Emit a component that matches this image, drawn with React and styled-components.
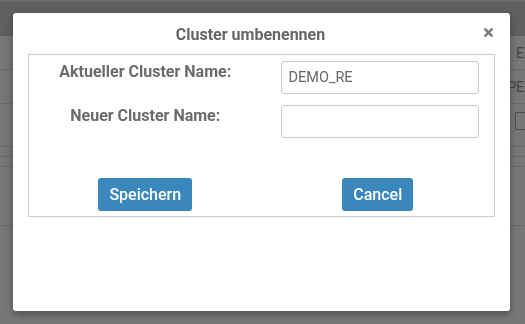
import React from 'react';
import styled, { createGlobalStyle } from 'styled-components';
import { FaTimes } from 'react-icons/fa';

const GlobalStyle = createGlobalStyle`
  html, body {
    margin: 0;
    padding: 0;
    width: 525px;
    height: 324px;
    overflow: hidden;
    font-family: Roboto, "Liberation Sans", Arial, sans-serif;
  }
`;

const Page = styled.div`
  width: 525px;
  height: 324px;
  background: #eeeeee;
`;

const NavBar = styled.div`
  height: 34px;
  border-top: 2px solid #d8d8d8;
  background: #c0c0c0;
  display: flex;
`;

const NavCell = styled.div`
  width: ${p => p.w}px;
  border-right: 1px solid #b4b4b4;
`;

const TableRow = styled.div`
  height: ${p => p.h}px;
  border-bottom: 1px solid #d6d6d6;
  display: flex;
  justify-content: flex-end;
  align-items: ${p => p.top ? 'flex-start' : 'center'};
  color: #888;
  font-size: 14px;
`;

const CellText = styled.span`
  padding-right: 1px;
`;

const TinyButton = styled.span`
  width: 9px;
  height: 16px;
  margin-top: 8px;
  border: 1px solid #999;
  border-right: none;
  border-radius: 2px 0 0 2px;
`;

const Backdrop = styled.div`
  position: fixed;
  inset: 0;
  background: rgba(0, 0, 0, 0.5);
`;

const Modal = styled.div`
  position: fixed;
  left: 13px;
  top: 13px;
  width: 497px;
  height: 298px;
  box-sizing: border-box;
  background: #fff;
  border-radius: 3px;
  box-shadow: 0 3px 9px rgba(0, 0, 0, 0.35);
  padding: 0 15px;
`;

const Header = styled.div`
  height: 41px;
  padding-right: 22px;
  display: flex;
  align-items: center;
  justify-content: center;
  position: relative;
`;

const Title = styled.h4`
  margin: 0;
  padding-top: 1px;
  font-size: 16px;
  font-weight: 700;
  color: #666;
`;

const Close = styled.span`
  position: absolute;
  right: 0;
  top: 13px;
  color: #7a7a7a;
  display: flex;
  font-size: 13px;
`;

const FormBox = styled.div`
  border: 1px solid #c9cdd1;
  padding: 6px 0 5px;
  display: grid;
  grid-template-columns: minmax(0, 1fr) minmax(0, 1fr);
  row-gap: 11px;
`;

const Label = styled.label`
  text-align: center;
  font-size: 16px;
  font-weight: 700;
  color: #6b6b6b;
  padding-top: 1px;
`;

const Input = styled.input`
  margin: 0 15px 0 19px;
  min-width: 0;
  height: 33px;
  box-sizing: border-box;
  border: 1px solid #c6cbd0;
  border-radius: 3px;
  padding: 0 7px;
  font-family: Roboto, "Liberation Sans", Arial, sans-serif;
  font-size: 14.5px;
  color: #666;
  outline: none;
`;

const ButtonCell = styled.div`
  display: flex;
  justify-content: center;
  margin-top: 29px;
`;

const Button = styled.button`
  height: 33px;
  padding: 0 11px;
  border: none;
  border-radius: 3px;
  background: #3a87be;
  color: #fff;
  font-family: Roboto, "Liberation Sans", Arial, sans-serif;
  font-size: 16px;
  font-weight: 500;
`;

const rows = [
  { h: 33, content: <CellText>E</CellText> },
  { h: 33, content: <CellText>PE</CellText> },
  { h: 42, content: <TinyButton />, top: true },
  { h: 9, content: null },
  { h: 9, content: null },
  { h: 58, content: null },
];

export default function App() {
  return (
    <>
      <GlobalStyle />
      <Page>
        <NavBar>
          <NavCell w={36} />
          <NavCell w={396} />
        </NavBar>
        {rows.map((r, i) => (
          <TableRow key={i} h={r.h} top={r.top}>{r.content}</TableRow>
        ))}
      </Page>
      <Backdrop />
      <Modal>
        <Header>
          <Title>Cluster umbenennen</Title>
          <Close><FaTimes /></Close>
        </Header>
        <FormBox>
          <Label>Aktueller Cluster Name:</Label>
          <Input defaultValue="DEMO_RE" />
          <Label>Neuer Cluster Name:</Label>
          <Input />
          <ButtonCell><Button>Speichern</Button></ButtonCell>
          <ButtonCell><Button>Cancel</Button></ButtonCell>
        </FormBox>
      </Modal>
    </>
  );
}
